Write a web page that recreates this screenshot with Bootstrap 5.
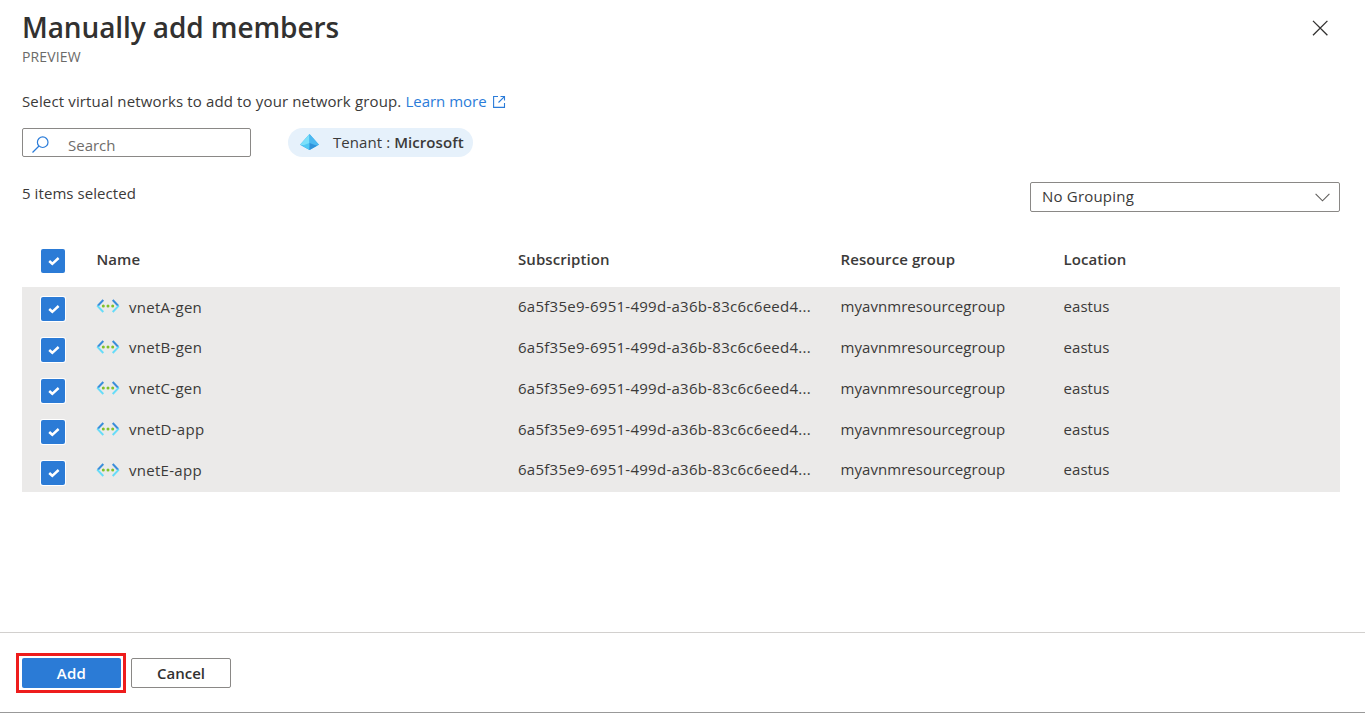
<!DOCTYPE html>
<html lang="en">
<head>
<meta charset="utf-8">
<meta name="viewport" content="width=device-width, initial-scale=1">
<title>Manually add members</title>
<link href="https://cdn.jsdelivr.net/npm/bootstrap@5.3.0/dist/css/bootstrap.min.css" rel="stylesheet">
<style>
  body { font-family: "Open Sans", "Noto Sans", sans-serif; font-size: 15px; line-height: 20px; color: #3b3a39; background: #fff; }
  .panel { height: 713px; border-bottom: 1px solid #999; }
  .panel-head { height: 91px; padding: 8px 36px 0 22px; }
  .panel-head h1 { font-size: 28px; line-height: 38px; font-weight: 600; color: #323130; letter-spacing: -.1px; }
  .preview { font-size: 14px; line-height: 22px; color: #6b6a68; letter-spacing: .15px; }
  .close-icon { margin-top: 11px; }
  .panel-main { padding: 0 25px 0 22px; }
  .intro { letter-spacing: .14px; }
  .learn { color: #2b7cd9; margin-left: 4px; letter-spacing: 0; }
  .learn svg { margin-left: 6px; }
  .filters { margin-top: 17px; gap: 37px; }
  .search-box { width: 229px; height: 29px; border: 1px solid #8a8886; border-radius: 2px; padding-left: 9px; }
  .search-box svg { margin-top: 4px; }
  .search-box .form-control { font-size: 15px; line-height: 20px; padding: 4px 0 0 19px; color: #605e5c; }
  .search-box .form-control::placeholder { color: #6f6d6b; opacity: 1; }
  .tenant { height: 29px; padding: 0 9px 2px 12px; background: #e6f1fb; border-radius: 15px; letter-spacing: .07px; }
  .tenant svg { margin-right: 14px; }
  .toolbar-row { margin-top: 25px; height: 30px; }
  .selected-count { margin-top: 1px; letter-spacing: .07px; }
  .grouping { width: 310px; height: 30px; border: 1px solid #8a8886; border-radius: 2px; padding: 0 9px 2px 11px; letter-spacing: .2px; }
  .grouping svg { margin-top: 2px; }
  .vnets { margin: 22px 0 0; table-layout: fixed; color: #3b3a39; }
  .vnets th, .vnets td { padding: 0; border: 0; white-space: nowrap; vertical-align: top; }
  .vnets th { height: 53px; padding-top: 15px; font-weight: 600; letter-spacing: .08px; }
  .vnets td { height: 41px; padding-top: 9px; background: #ebeae9; letter-spacing: .06px; }
  .vnets td:nth-child(3) { letter-spacing: .27px; }
  .vnets .pick { padding-left: 19px; }
  .vnets td.pick { padding-top: 10px; }
  .vnets tbody tr:last-child td:nth-child(n+3) { padding-top: 8px; }
  .box { display: block; width: 24px; height: 24px; background: #2b7bd6; border-radius: 2px; }
  td .box { box-shadow: 0 0 0 1px #fff; }
  .vcell { letter-spacing: .28px; margin-left: -1px; }
  .vcell svg { margin-top: 3px; }
  .vname { margin-left: 9.5px; }
  .vnets tbody tr:first-child .vname { padding-top: 1px; }
  .panel-foot { height: 80px; border-top: 1px solid #d2d0ce; padding: 20px 0 0 16px; }
  .marked { border: 3px solid #ee1c1c; padding: 2px 2px 2px 3px; width: 110px; height: 40px; }
  .panel-foot .btn { width: 100px; height: 30px; border-radius: 2px; font-size: 15px; line-height: 20px; font-weight: 600; padding: 0; }
  .panel-foot .btn-add { background: #2b7bd6; color: #fff; width: 99px; letter-spacing: .3px; }
  .panel-foot .btn-cancel { border: 1px solid #8a8886; color: #323130; margin: 5px 0 0 5px; }
</style>
</head>
<body>
<svg class="d-none" xmlns="http://www.w3.org/2000/svg">
  <symbol id="check" viewBox="0 0 24 24"><path d="M8.2 12l3.1 2.8 6.3-5.8" fill="none" stroke="#fff" stroke-width="2.5"/></symbol>
  <symbol id="vnet" viewBox="0 0 24 14">
    <path d="M7.3 1L1.6 7M16.7 1l5.7 6" stroke="#3a8ddb" stroke-width="2" fill="none"/>
    <path d="M1.2 6.6L7.3 13M22.8 6.6L16.7 13" stroke="#67dcf8" stroke-width="2" fill="none"/>
    <g fill="#80c12a"><circle cx="7.3" cy="7" r="1.5"/><circle cx="12" cy="7" r="1.5"/><circle cx="16.7" cy="7" r="1.5"/></g>
  </symbol>
</svg>
<div class="panel d-flex flex-column">
  <header class="panel-head d-flex justify-content-between align-items-start">
    <div>
      <h1 class="m-0">Manually add members</h1>
      <div class="preview">PREVIEW</div>
    </div>
    <svg class="close-icon" width="18" height="18" viewBox="0 0 18 18"><path d="M2 1.9l14.4 14.4M16.4 1.9L2 16.3" stroke="#323130" stroke-width="1.3" fill="none"/></svg>
  </header>
  <main class="panel-main flex-grow-1">
    <div class="intro d-flex align-items-center">
      <span>Select virtual networks to add to your network group.</span>
      <a href="#" class="learn text-decoration-none d-flex align-items-center"><span>Learn more</span>
        <svg width="13" height="13" viewBox="0 0 13 13" fill="none" stroke="#2b7cd9" stroke-width="1.1"><path d="M5 1.5H.6v10.9h10.9V8M7.5 1.5h4v4M11.4 1.7L5.5 7.5"/></svg></a>
    </div>
    <div class="filters d-flex align-items-center">
      <div class="search-box d-flex align-items-center">
        <svg class="flex-shrink-0" width="17" height="17" viewBox="0 0 17 17" fill="none" stroke="#2b7cd9" stroke-width="1.2"><circle cx="10.7" cy="6.2" r="5.3"/><path d="M7 10L.5 16.5"/></svg>
        <input class="form-control border-0 bg-transparent shadow-none" type="text" placeholder="Search">
      </div>
      <div class="tenant d-flex align-items-center">
        <svg width="19" height="16" viewBox="0 0 19 16"><path d="M9.5 0L0 10.7 9.5 16 19 10.7z" fill="#37a9e8"/><path d="M9.5 0L0 10.7 9.5 13z" fill="#7be0fa"/><path d="M9.5 0L19 10.7 9.5 13z" fill="#4bb8f1"/><path d="M9.5 16V9L2 11.8z" fill="#50c9f4"/><path d="M9.5 16V9l7.5 2.8z" fill="#2f92da"/></svg>
        <span>Tenant : <b class="fw-semibold">Microsoft</b></span>
      </div>
    </div>
    <div class="toolbar-row d-flex justify-content-between">
      <div class="selected-count">5 items selected</div>
      <div class="grouping d-flex align-items-center justify-content-between"><span>No Grouping</span>
        <svg width="15" height="9" viewBox="0 0 15 9"><path d="M.6.8l6.9 7 6.9-7" fill="none" stroke="#605e5c" stroke-width="1.1"/></svg></div>
    </div>
    <table class="vnets table">
      <colgroup><col style="width:74.5px"><col style="width:421.5px"><col style="width:322.5px"><col style="width:223px"><col></colgroup>
      <thead><tr><th class="pick"><svg class="box"><use href="#check"/></svg></th><th>Name</th><th>Subscription</th><th>Resource group</th><th>Location</th></tr></thead>
      <tbody>
        <tr><td class="pick"><svg class="box"><use href="#check"/></svg></td><td><div class="vcell d-flex align-items-start"><svg width="24" height="14"><use href="#vnet"/></svg><span class="vname">vnetA-gen</span></div></td><td>6a5f35e9-6951-499d-a36b-83c6c6eed4...</td><td>myavnmresourcegroup</td><td>eastus</td></tr>
        <tr><td class="pick"><svg class="box"><use href="#check"/></svg></td><td><div class="vcell d-flex align-items-start"><svg width="24" height="14"><use href="#vnet"/></svg><span class="vname">vnetB-gen</span></div></td><td>6a5f35e9-6951-499d-a36b-83c6c6eed4...</td><td>myavnmresourcegroup</td><td>eastus</td></tr>
        <tr><td class="pick"><svg class="box"><use href="#check"/></svg></td><td><div class="vcell d-flex align-items-start"><svg width="24" height="14"><use href="#vnet"/></svg><span class="vname">vnetC-gen</span></div></td><td>6a5f35e9-6951-499d-a36b-83c6c6eed4...</td><td>myavnmresourcegroup</td><td>eastus</td></tr>
        <tr><td class="pick"><svg class="box"><use href="#check"/></svg></td><td><div class="vcell d-flex align-items-start"><svg width="24" height="14"><use href="#vnet"/></svg><span class="vname">vnetD-app</span></div></td><td>6a5f35e9-6951-499d-a36b-83c6c6eed4...</td><td>myavnmresourcegroup</td><td>eastus</td></tr>
        <tr><td class="pick"><svg class="box"><use href="#check"/></svg></td><td><div class="vcell d-flex align-items-start"><svg width="24" height="14"><use href="#vnet"/></svg><span class="vname">vnetE-app</span></div></td><td>6a5f35e9-6951-499d-a36b-83c6c6eed4...</td><td>myavnmresourcegroup</td><td>eastus</td></tr>
      </tbody>
    </table>
  </main>
  <footer class="panel-foot d-flex align-items-start">
    <div class="marked"><button class="btn btn-add border-0 d-block">Add</button></div>
    <button class="btn btn-cancel">Cancel</button>
  </footer>
</div>
<script src="https://cdn.jsdelivr.net/npm/bootstrap@5.3.0/dist/js/bootstrap.bundle.min.js"></script>
</body>
</html>
